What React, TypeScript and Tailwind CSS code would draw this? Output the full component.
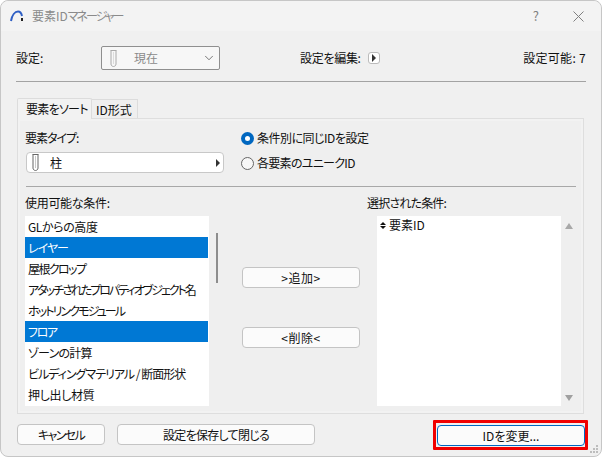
import { ChevronDown } from "lucide-react";

const columnIcon = (color: string) => (
  <svg width="7" height="17" viewBox="0 0 7 17" fill="none" stroke={color} className="shrink-0">
    <path d="M.5 .5h6M1 .5v13.500c0 1.300 1 2.500 2.500 2.500s2.500-1.200 2.500-2.500V.5" strokeWidth="1" />
    <path d="M3.500 2v12" strokeWidth="1" opacity="0.35" />
  </svg>
);

const availableConditions = [
  { label: "GLからの高度", selected: false, tracking: "tracking-[-0.4px]" },
  { label: "レイヤー", selected: true, tracking: "tracking-[-1px]" },
  { label: "屋根クロップ", selected: false, tracking: "tracking-[-1.6px]" },
  { label: "アタッチされたプロパティオブジェクト名", selected: false, tracking: "tracking-[-2px]" },
  { label: "ホットリンクモジュール", selected: false, tracking: "tracking-[-1.9px]" },
  { label: "フロア", selected: true, tracking: "tracking-[-1.4px]" },
  { label: "ゾーンの計算", selected: false, tracking: "tracking-[-0.8px]" },
  { label: "ビルディングマテリアル / 断面形状", selected: false, tracking: "tracking-[-1px]" },
  { label: "押し出し材質", selected: false, tracking: "tracking-[-0.3px]" },
];

const Button = ({ label, className }: { label: string; className: string }) => (
  <button className={`h-[21px] rounded-[4px] border border-[#c4c4c4] bg-[#fbfbfb] text-[12px] leading-[19px] text-[#111] ${className}`}>
    {label}
  </button>
);

export default function App() {
  return (
    <div className="w-[602px] h-[457px] bg-white text-[12px] text-[#111] font-['Noto_Sans_CJK_JP','Liberation_Sans',sans-serif] [font-feature-settings:'palt']">
      <div className="relative flex h-full flex-col rounded-[8px] border border-[#c6c6c6] bg-[#f0f0f0]">
        {/* title bar */}
        <div className="flex h-[30px] items-center rounded-t-[8px] bg-[#f3f3f3] pl-[9px] pr-[17px]">
          <svg width="14" height="12" viewBox="0 0 14 12" fill="none">
            <path d="M1 11C2 5 5 1.500 8 1.500c2.500 0 3.500 2 4 4.500" stroke="#2f5fc4" strokeWidth="2" />
            <path d="M11 8h2v3h-2z" fill="#222" />
          </svg>
          <span className="ml-[8px] text-[#8a8a8a]">
            要素ID<span className="tracking-[-2px]">マネージャー</span>
          </span>
          <span className="ml-auto mr-[34px] text-[13px] text-[#808080]">?</span>
          <svg width="11" height="11" viewBox="0 0 11 11" stroke="#808080" strokeWidth="1">
            <path d="M.5 .5l10 10M10.500 .5l-10 10" />
          </svg>
        </div>

        {/* settings row */}
        <div className="mt-[15px] flex h-[24px] items-center pl-[15px] pr-[15px]">
          <span className="w-[85px]">設定:</span>
          <div className="flex h-[24px] w-[119px] items-center rounded-[2px] border border-[#8f8f8f] bg-[#f7f7f7] pl-[8px] pr-[3px] text-[#8a8a8a]">
            {columnIcon("#aaa")}
            <span className="ml-[17px]">現在</span>
            <ChevronDown size={14} strokeWidth={1.2} className="ml-auto text-[#444]" />
          </div>
          <span className="ml-[80px] tracking-[-0.3px]">設定を編集:</span>
          <div className="ml-[7px] flex h-[12px] w-[12px] items-center justify-center rounded-[3px] border border-[#bbb] bg-white">
            <div className="h-0 w-0 border-y-[4px] border-l-[4px] border-y-transparent border-l-[#333]" />
          </div>
          <span className="ml-auto tracking-[0.3px]">設定可能: 7</span>
        </div>

        <div className="mx-[15px] mt-[11px] h-px bg-[#a3a3a3]" />

        {/* tabs */}
        <div className="mt-[16px] flex h-[21px] pl-[16px]">
          <div className="z-10 h-[21px] w-[75px] whitespace-nowrap rounded-t-[2px] border border-b-0 border-[#dcdcdc] bg-[#f2f2f2] pl-[8px] leading-[19px] tracking-[-0.7px]">要素をソート</div>
          <div className="mt-[1px] h-[20px] w-[46px] border border-l-0 border-b-0 border-[#dcdcdc] bg-[#efefef] pl-[4px] leading-[19px]">ID形式</div>
        </div>

        <div className="-mt-px ml-[16px] h-[296px] w-[567px] border border-[#dedede] bg-[#f2f2f2] p-[2px]">
          <div className="h-full bg-[#efefef] pl-[5px] pr-[6px] pt-[8px]">
            <div className="flex">
              <div className="w-[216px]">
                <div className="h-[18px] leading-[18px] tracking-[-1px]">要素タイプ:</div>
                <div className="ml-[1px] mt-[5px] flex h-[21px] w-[198px] items-center rounded-[4px] border border-[#c8c8c8] bg-white pl-[5px] pr-[3px]">
                  {columnIcon("#666")}
                  <span className="ml-[11px]">柱</span>
                  <div className="ml-auto h-0 w-0 border-y-[4px] border-l-[4px] border-y-transparent border-l-[#333]" />
                </div>
              </div>
              <div className="flex flex-col">
                <label className="flex h-[18px] items-center">
                  <span className="flex h-[13px] w-[13px] items-center justify-center rounded-full bg-[#0067c0]">
                    <span className="h-[5px] w-[5px] rounded-full bg-white" />
                  </span>
                  <span className="ml-[3px] tracking-[-0.5px]">条件別に同じIDを設定</span>
                </label>
                <label className="mt-[7px] flex h-[18px] items-center">
                  <span className="h-[13px] w-[13px] rounded-full border border-[#666] bg-[#f7f7f7]" />
                  <span className="ml-[3px] tracking-[-0.7px]">各要素のユニークID</span>
                </label>
              </div>
            </div>

            <div className="ml-[1px] mt-[13px] h-px w-[550px] bg-[#a8a8a8]" />

            <div className="mt-[7px] flex">
              {/* available list */}
              <div className="w-[184px]">
                <div className="h-[18px] leading-[18px] tracking-[-0.3px]">使用可能な条件:</div>
                <div className="mt-[4px] h-[190px] bg-white">
                  {availableConditions.map((item) => (
                    <div
                      key={item.label}
                      className={`h-[21px] whitespace-nowrap pl-[3px] leading-[21px] ${item.tracking} ${item.selected ? "mr-px bg-[#0078d4] text-white" : ""}`}
                    >
                      {item.label}
                    </div>
                  ))}
                </div>
              </div>

              <div className="ml-[7px] mt-[39px] h-[50px] w-[2px] bg-[#8d8d8d]" />

              <div className="ml-[24px] flex w-[118px] flex-col pt-[73px]">
                <Button label=">追加>" className="w-full tracking-[0.5px]" />
                <Button label="<削除<" className="mt-[39px] w-full tracking-[0.5px]" />
              </div>

              {/* selected list */}
              <div className="ml-[17px] w-[184px]">
                <div className="-ml-[10px] h-[18px] leading-[18px] tracking-[-0.8px]">選択された条件:</div>
                <div className="mt-[4px] flex h-[190px] items-start bg-white pl-[3px] leading-[18px]">
                  <div className="mr-[3px] mt-[6px] flex flex-col gap-[1px]">
                    <div className="h-0 w-0 border-x-[3px] border-b-[3px] border-x-transparent border-b-[#111]" />
                    <div className="h-0 w-0 border-x-[3px] border-t-[3px] border-x-transparent border-t-[#111]" />
                  </div>
                  <span>要素ID</span>
                </div>
              </div>

              {/* arrows */}
              <div className="ml-[4px] mt-[22px] flex h-[190px] w-[8px] flex-col items-center justify-between pb-[5px] pt-[7px]">
                <div className="h-0 w-0 border-x-[4px] border-b-[6px] border-x-transparent border-b-[#a8a8a8]" />
                <div className="h-0 w-0 border-x-[4px] border-t-[6px] border-x-transparent border-t-[#a0a0a0]" />
              </div>
            </div>
          </div>
        </div>

        {/* footer */}
        <div className="mt-[10px] flex items-center pl-[16px]">
          <Button label="キャンセル" className="w-[88px] tracking-[-1.6px]" />
          <Button label="設定を保存して閉じる" className="ml-[12px] w-[198px] tracking-[-0.7px]" />
          <div className="-my-[5px] ml-[118px] rounded-[1px] border-[3px] border-[#f00000] pb-px pl-px pt-[2px]">
            <button className="block h-[21px] w-[148px] rounded-[4px] border border-[#0067c0] bg-[#fbfbfb] text-[12px] leading-[19px]">
              IDを変更...
            </button>
          </div>
        </div>

        {/* resize grip */}
        <svg width="9" height="9" viewBox="0 0 9 9" className="absolute bottom-[2px] right-[2px]" fill="#bdbdbd">
          <rect x="6" y="0" width="2" height="2" />
          <rect x="3" y="3" width="2" height="2" />
          <rect x="6" y="3" width="2" height="2" />
          <rect x="0" y="6" width="2" height="2" />
          <rect x="3" y="6" width="2" height="2" />
          <rect x="6" y="6" width="2" height="2" />
        </svg>
      </div>
    </div>
  );
}
